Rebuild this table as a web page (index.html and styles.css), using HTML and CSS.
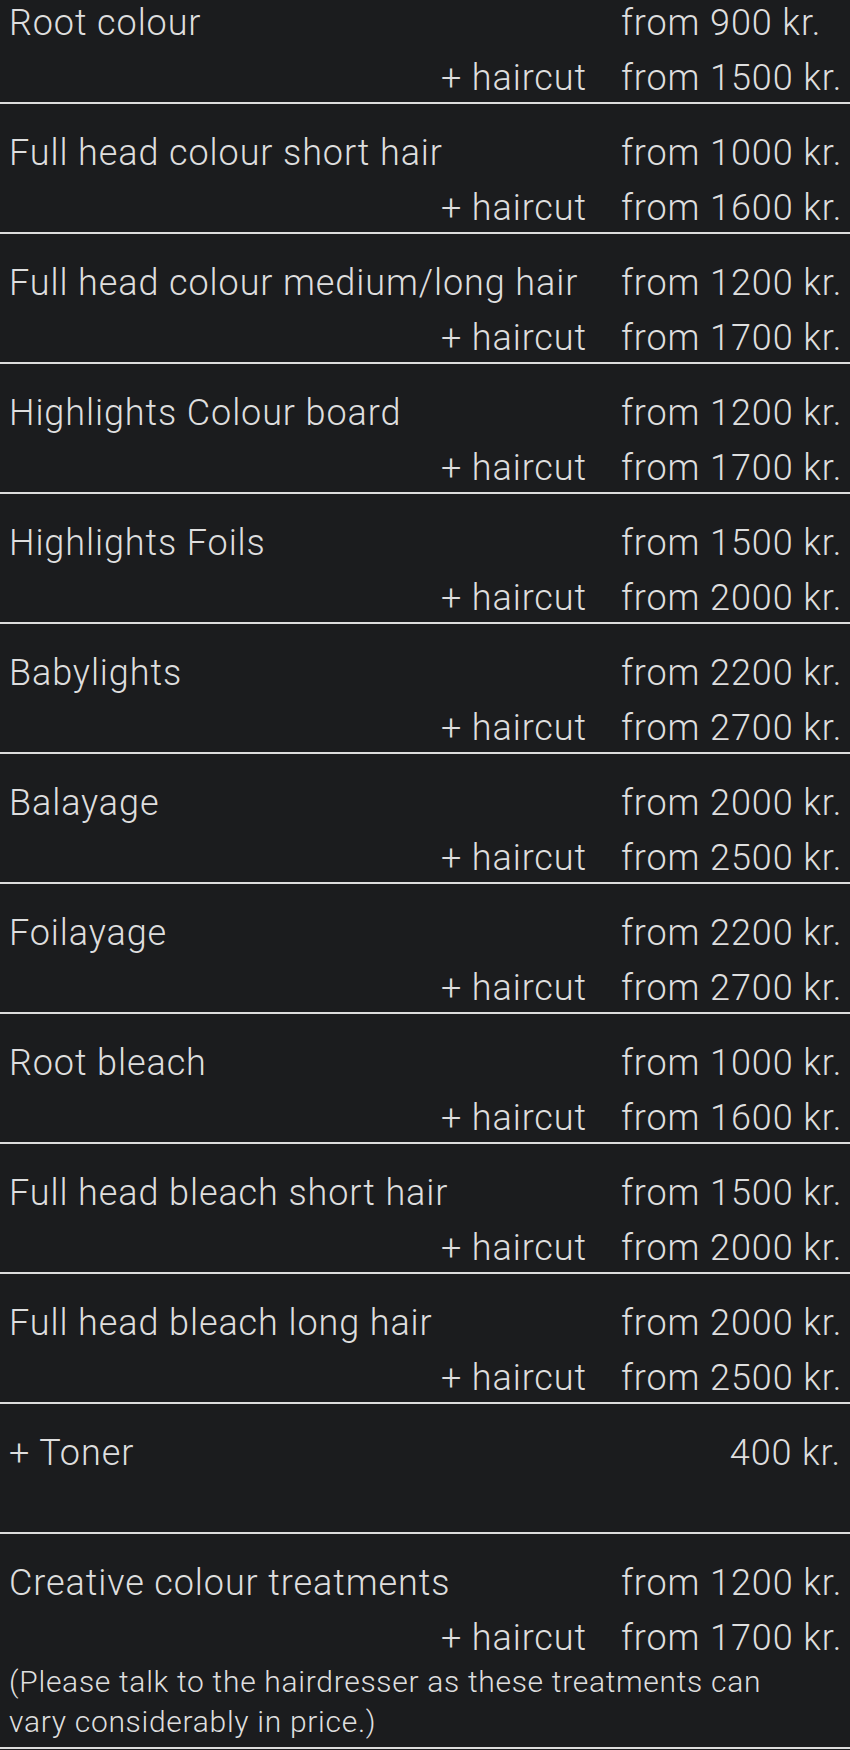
FILE: index.html
```html
<html>
  <head>
    <title>Colour prices</title>
    <meta charset="UTF-8">
    <link rel="stylesheet" href="styles.css">
  </head>
  <body>
    <div class="menu">
      <div class="item">
        <span class="name">Root colour</span>
        <span class="price">from 900 kr.</span>
        <span class="extra">+ haircut</span>
        <span class="price">from 1500 kr.</span>
      </div>
      <div class="item">
        <span class="name">Full head colour short hair</span>
        <span class="price">from 1000 kr.</span>
        <span class="extra">+ haircut</span>
        <span class="price">from 1600 kr.</span>
      </div>
      <div class="item">
        <span class="name">Full head colour medium/long hair</span>
        <span class="price">from 1200 kr.</span>
        <span class="extra">+ haircut</span>
        <span class="price">from 1700 kr.</span>
      </div>
      <div class="item">
        <span class="name">Highlights Colour board</span>
        <span class="price">from 1200 kr.</span>
        <span class="extra">+ haircut</span>
        <span class="price">from 1700 kr.</span>
      </div>
      <div class="item">
        <span class="name">Highlights Foils</span>
        <span class="price">from 1500 kr.</span>
        <span class="extra">+ haircut</span>
        <span class="price">from 2000 kr.</span>
      </div>
      <div class="item">
        <span class="name">Babylights</span>
        <span class="price">from 2200 kr.</span>
        <span class="extra">+ haircut</span>
        <span class="price">from 2700 kr.</span>
      </div>
      <div class="item">
        <span class="name">Balayage</span>
        <span class="price">from 2000 kr.</span>
        <span class="extra">+ haircut</span>
        <span class="price">from 2500 kr.</span>
      </div>
      <div class="item">
        <span class="name">Foilayage</span>
        <span class="price">from 2200 kr.</span>
        <span class="extra">+ haircut</span>
        <span class="price">from 2700 kr.</span>
      </div>
      <div class="item">
        <span class="name">Root bleach</span>
        <span class="price">from 1000 kr.</span>
        <span class="extra">+ haircut</span>
        <span class="price">from 1600 kr.</span>
      </div>
      <div class="item">
        <span class="name">Full head bleach short hair</span>
        <span class="price">from 1500 kr.</span>
        <span class="extra">+ haircut</span>
        <span class="price">from 2000 kr.</span>
      </div>
      <div class="item">
        <span class="name">Full head bleach long hair</span>
        <span class="price">from 2000 kr.</span>
        <span class="extra">+ haircut</span>
        <span class="price">from 2500 kr.</span>
      </div>
      <div class="item">
        <span class="name">+ Toner</span>
        <span class="price right">400 kr.</span>
        <span class="extra"></span>
        <span class="price"></span>
      </div>
      <div class="item">
        <span class="name">Creative colour treatments</span>
        <span class="price">from 1200 kr.</span>
        <span class="extra">+ haircut</span>
        <span class="price">from 1700 kr.</span>
        <p class="note">(Please talk to the hairdresser as these treatments can vary considerably in price.)</p>
      </div>
    </div>
  </body>
</html>
```

FILE: styles.css
```css
body {
  margin: 0;
  background: #1b1c1e;
  color: #dedede;
  font-family: Roboto, "Liberation Sans", sans-serif;
  font-weight: 300;
}
.menu {
  display: flex;
  flex-direction: column;
}
.item {
  display: grid;
  grid-template-columns: 1fr 229px;
  row-gap: 7px;
  padding: 25px 0 0 9px;
  border-bottom: 2px solid #dcdcdc;
  font-size: 36px;
  line-height: 48px;
  letter-spacing: 0.9px;
}
.item:first-child {
  padding-top: 0;
  margin-top: -1px;
}
.name {
  white-space: nowrap;
}
.extra {
  text-align: right;
  padding-right: 34px;
  min-height: 48px;
}
.price {
  white-space: nowrap;
}
.price.right {
  text-align: right;
  padding-right: 9px;
}
.note {
  grid-column: 1 / 3;
  margin: -7px 0 5px;
  font-size: 30px;
  line-height: 40px;
  letter-spacing: 0.7px;
  padding-right: 60px;
}
```
